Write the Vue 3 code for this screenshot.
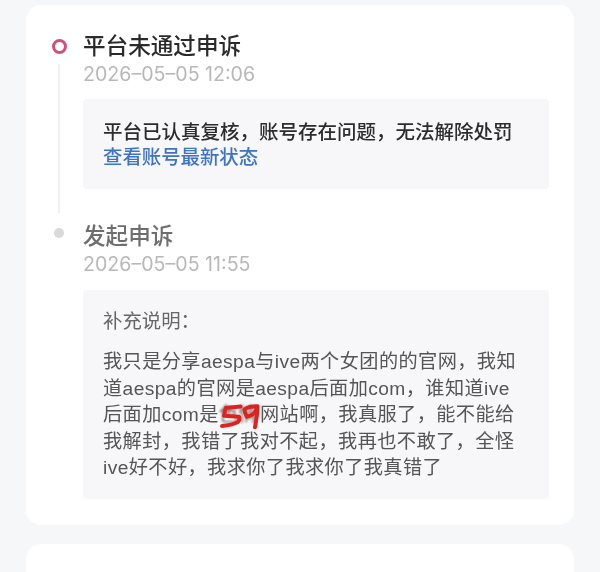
<script setup>
const lines = [
  '我只是分享aespa与ive两个女团的的官网，我知',
  '道aespa的官网是aespa后面加com，谁知道ive',
  null,
  '我解封，我错了我对不起，我再也不敢了，全怪',
  'ive好不好，我求你了我求你了我真错了'
]
</script>

<template>
  <div class="page">
    <section class="card">
      <div class="item first">
        <div class="rail">
          <span class="ring"></span>
          <span class="line"></span>
        </div>
        <div class="body">
          <h2 class="title">平台未通过申诉</h2>
          <p class="date">2026–05–05 12:06</p>
          <div class="box result">
            <p class="notice">平台已认真复核，账号存在问题，无法解除处罚</p>
            <a class="link">查看账号最新状态</a>
          </div>
        </div>
      </div>
      <div class="item second">
        <div class="rail">
          <span class="dot"></span>
        </div>
        <div class="body">
          <h2 class="title muted">发起申诉</h2>
          <p class="date">2026–05–05 11:55</p>
          <div class="box detail">
            <p class="label">补充说明：</p>
            <p class="desc">
              <template v-for="(l, i) in lines" :key="i">
                <span v-if="l" class="ln">{{ l }}</span>
                <span v-else class="ln">后面加com是<span class="mark"><span class="hidden">色情</span><svg class="scribble" width="44" height="28" viewBox="0 0 44 28" fill="none" stroke="#e0211d" stroke-width="4" stroke-linecap="round" stroke-linejoin="round"><path d="M22.5 3.5 L7.7 5 L6 12.7 L21 13.7 C22 16 21 18 19.5 19.3 C15 21.5 9 22.5 4 23" /><path d="M26.5 6.5 C29 4 35 3.2 39.5 3.2 C38.5 8 35 13 28.7 13.7 C27.5 11 26.5 9 26.5 6.5 Z" /><path d="M39.5 4.3 C39.5 11 38 18 37 24.3" /></svg></span>网站啊，我真服了，能不能给</span>
              </template>
            </p>
          </div>
        </div>
      </div>
    </section>
    <section class="card next"></section>
  </div>
</template>

<style scoped>
.page {
  width: 600px;
  height: 572px;
  box-sizing: border-box;
  padding: 5px 26px 0;
  background: #f6f7f9;
  overflow: hidden;
  font-family: "Noto Sans CJK SC", "Noto Sans", sans-serif;
  filter: blur(0.35px);
}
.card {
  background: #fff;
  border-radius: 15px;
  padding: 24px 25px 0;
  height: 520px;
  box-sizing: border-box;
}
.card.next {
  margin-top: 19px;
  height: 60px;
}
.item {
  display: flex;
}
.first {
  min-height: 184px;
}
.rail {
  width: 32px;
  flex: none;
  display: flex;
  flex-direction: column;
  align-items: flex-start;
}
.ring {
  width: 15px;
  height: 15px;
  box-sizing: border-box;
  border: 3.8px solid #d0507a;
  border-radius: 50%;
  margin: 9.5px 0 0 1px;
}
.line {
  flex: 1;
  width: 2px;
  background: #f2f0ee;
  margin: 10.5px 0 0 7px;
}
.dot {
  width: 10px;
  height: 10px;
  border-radius: 50%;
  background: #d9d9d9;
  margin: 9px 0 0 3px;
}
.body {
  flex: 1;
  min-width: 0;
}
.title {
  margin: 0;
  font-size: 22.6px;
  line-height: 32px;
  font-weight: 500;
  color: #2a2a2a;
}
.title.muted {
  color: #6e6e6e;
}
.date {
  margin: 2px 0 0;
  font-family: Inter, "Liberation Sans", sans-serif;
  font-size: 19.6px;
  line-height: 22px;
  color: #b8b8b8;
}
.box {
  background: #f7f7f9;
  border-radius: 4px;
  box-sizing: border-box;
  padding-left: 20px;
  width: 466px;
  font-family: "Liberation Sans", "Noto Sans CJK SC", sans-serif;
}
.result {
  height: 90px;
  margin-top: 14px;
  padding-top: 20px;
}
.notice {
  margin: 0;
  font-size: 19.5px;
  line-height: 26px;
  font-weight: 500;
  color: #2c2c2c;
  white-space: nowrap;
}
.link {
  display: block;
  font-size: 19.4px;
  line-height: 25px;
  font-weight: 500;
  color: #3f73c4;
}
.second {
  margin-top: 6px;
}
.detail {
  height: 209px;
  margin-top: 15px;
  padding-top: 18px;
}
.label {
  margin: 0;
  font-size: 19.4px;
  line-height: 27px;
  color: #666;
}
.desc {
  margin: 14px 0 0;
  font-size: 19.2px;
  letter-spacing: 0.4px;
  line-height: 26.5px;
  color: #555;
}
.ln {
  display: block;
  white-space: nowrap;
}
.mark {
  position: relative;
  display: inline-block;
  margin-right: 2px;
}
.hidden {
  filter: blur(1.2px);
  color: #666;
}
.scribble {
  position: absolute;
  left: -1px;
  top: 1px;
}
</style>
